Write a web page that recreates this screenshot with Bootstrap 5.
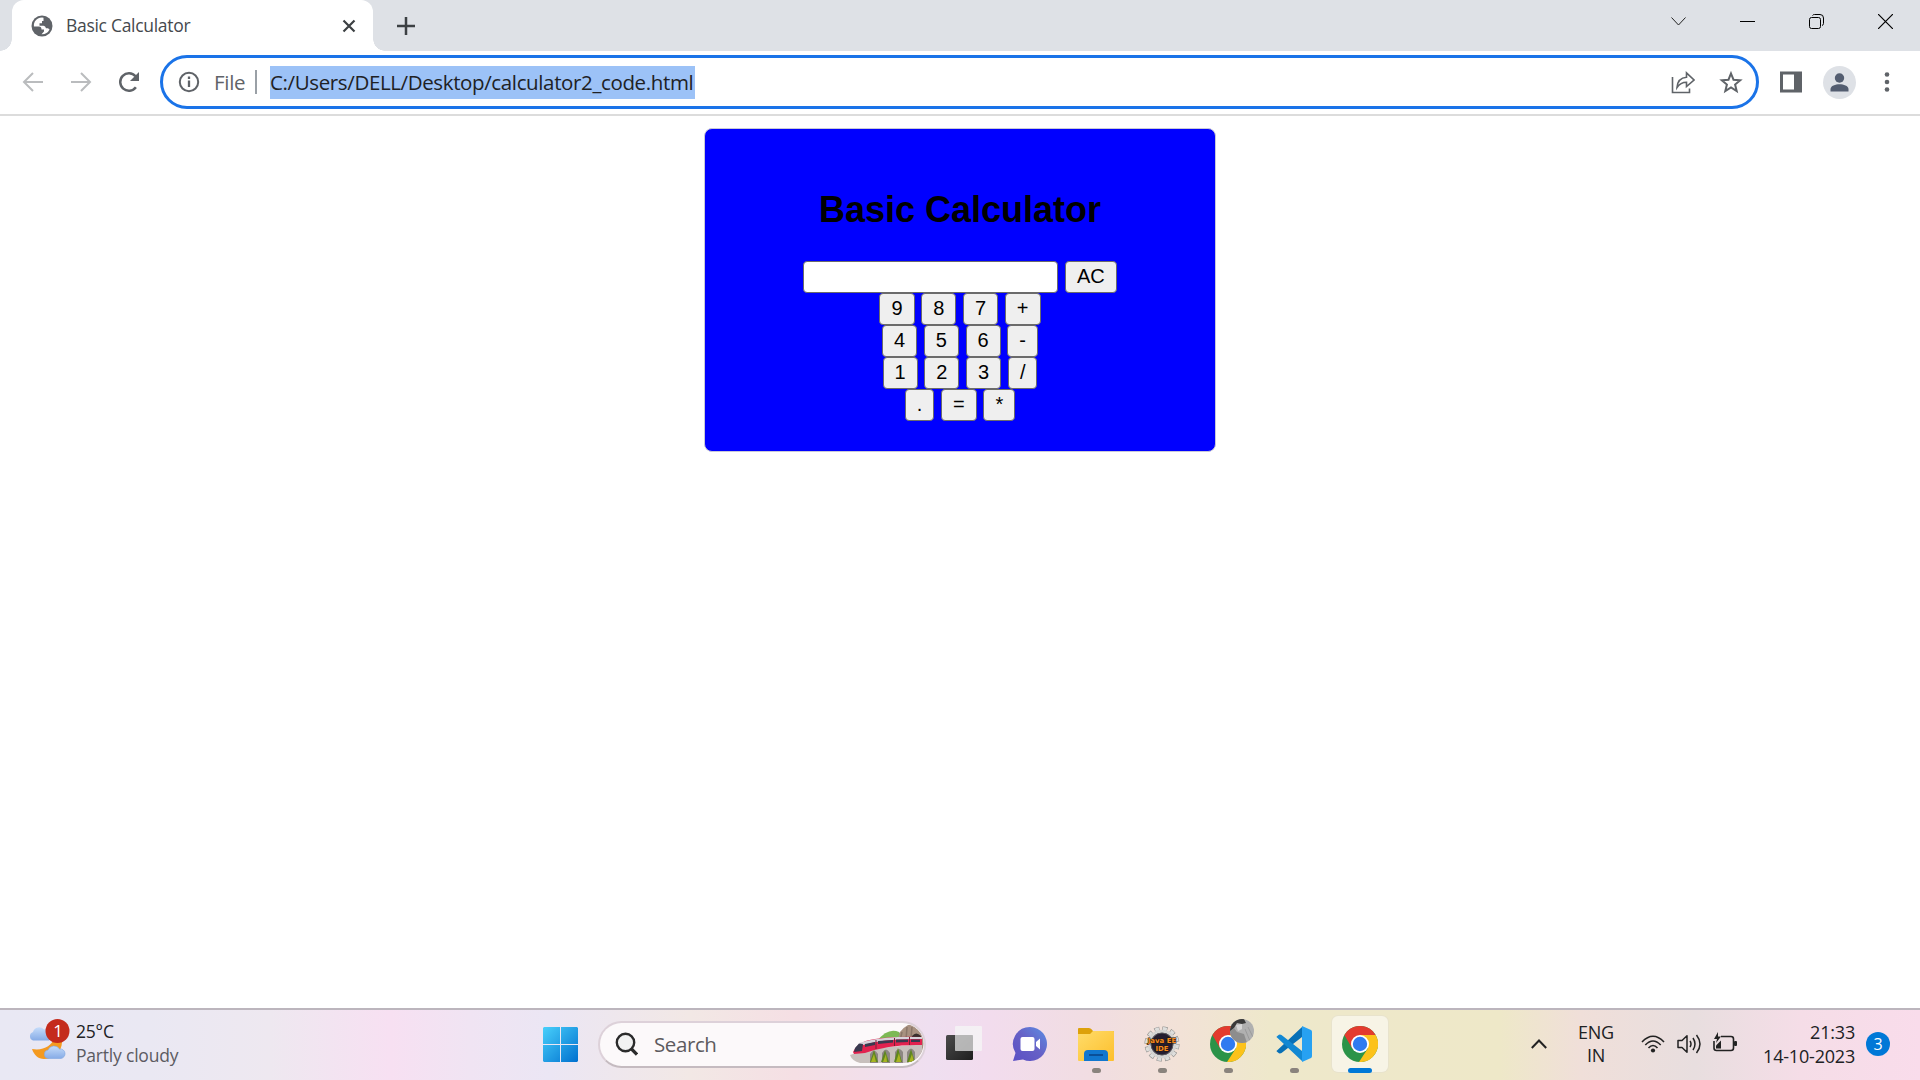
<!DOCTYPE html>
<html lang="en">
<head>
<meta charset="utf-8">
<title>Basic Calculator</title>
<link href="https://cdn.jsdelivr.net/npm/bootstrap@5.3.0/dist/css/bootstrap.min.css" rel="stylesheet">
<script src="https://cdn.jsdelivr.net/npm/bootstrap@5.3.0/dist/js/bootstrap.bundle.min.js"></script>
<style>
body{font-family:"Open Sans","Noto Sans",sans-serif;background:#fff;color:#202124}
svg{display:block;flex:none}
.tabstrip{height:51px;background:#dee1e6;padding-left:12px}
.tab-active{width:360.5px;height:51px;background:#fff;border-radius:12px 12px 0 0;padding:0 17px 0 19px;position:relative}
.tab-active::before,.tab-active::after{content:"";position:absolute;bottom:0;width:12px;height:12px}
.tab-active::before{left:-12px;background:radial-gradient(circle at 0 0,transparent 11.5px,#fff 12px)}
.tab-active::after{right:-12px;background:radial-gradient(circle at 100% 0,transparent 11.5px,#fff 12px)}
.tab-title{font-size:17.5px;letter-spacing:-.3px;margin-left:13px;color:#45494d}
.new-tab{margin-left:24px}
.win-controls{gap:54px;padding-right:27px;margin-bottom:8px}
.toolbar{height:65px;border-bottom:2px solid #dcdcdc;padding:4px 0 5px 21px}
.tool-gap{margin-left:24px}
.omnibox{width:1599px;height:54px;border:3px solid #1a73e8;border-radius:27px;padding:0 13px 0 15px;margin-left:19px}
.scheme{font-size:20.5px;letter-spacing:-.3px;color:#5f6368;margin-left:14px;width:41px}
.sep{width:2px;height:24px;background:#9aa0a6}
.url{font-size:20.5px;letter-spacing:-.37px;line-height:33px;height:33px;background:#9cc2f7;margin-left:13px;width:425px}
.calc{width:512px;height:324px;background:#00f;border:1px solid #c8c8d8;border-radius:8px;margin-top:12px;padding-top:57px;font-family:"Liberation Sans",Arial,sans-serif}
.calc h1{font-size:36px;font-weight:700;line-height:48px;color:#000;margin:0 0 27px}
.calc-row{gap:6.67px;height:32px}
.key,.display-box{height:32px;border:1px solid #6b6b6b;border-radius:4px;font-size:20px;line-height:28px;color:#000}
.key{background:#efefef;padding:0 11px 2px}
.display-box{width:255px;background:#fff}
.taskbar{height:72px;padding-bottom:2px;border-top:2px solid #bcb5bd;background:linear-gradient(90deg,#e9e8f4 0,#eae8f3 150px,#eee8f0 270px,#f7e0f2 390px,#f0e4f3 470px,#ebe6f4 550px,#f2e8e5 690px,#f5dfe4 795px,#efdff0 930px,#f2dcee 985px,#f1dde2 1090px,#f2e2d7 1180px,#eee8cb 1270px,#eee8c8 1500px,#f0dfd9 1580px,#e8dedf 1695px,#f5dde7 1800px,#f9dceb 1920px)}
.weather{width:515px;margin-left:28px;font-size:17.5px;line-height:24px;letter-spacing:-.2px}
.weather-icon{margin-bottom:9px}
.weather-text{margin-left:6px;margin-top:-2px}
.weather small{font-size:inherit;color:#5c5b62}
.search-pill{width:328px;height:47px;margin-left:20px;border-radius:24px;background:#fcf9fa;border:2px solid #ddd1d9;border-bottom-color:#c5bbc0;padding-left:15px;overflow:hidden}
.search-label{font-size:20.5px;letter-spacing:-.4px;color:#5d5b5e;margin-left:16px}
.apps{margin-left:10px}
.app{width:56px;height:56px;margin-right:10px;padding-top:10px;position:relative;border-radius:6px}
.app.running::after{content:"";position:absolute;width:9px;height:5px;border-radius:3px;background:#8a837d;bottom:-1px;left:23.5px}
.app.current{background:#f7f4e6;box-shadow:0 0 0 1px #e8e3cc}
.app.current::after{width:24px;left:16px;background:#0078d7}
.person-dot{position:absolute;left:30px;top:3px}
.tray{font-size:18px;line-height:24px;letter-spacing:-.2px;padding-right:30px}
.lang{width:48px;margin-left:25px;line-height:23px}
.net{margin-left:21px}
.tray-gap{margin-left:12px}
.clock{width:111px;margin-left:7px;margin-top:-1px}
.note{width:24px;height:24px;margin-left:11px;border-radius:50%;background:#0078d7;color:#fff;font-size:16px}
</style>
</head>
<body class="d-flex flex-column vh-100 overflow-hidden">
<svg width="0" height="0" class="position-absolute">
  <defs>
    <symbol id="chrome" viewBox="0 0 36 36">
      <circle cx="18" cy="18" r="18" fill="#2b9348"/>
      <path d="M18 9H33.6A18 18 0 0 1 17 36L25.8 22.5Z" fill="#fcc21b"/>
      <path d="M2.4 9A18 18 0 0 1 33.6 9H18L10.2 22.5Z" fill="#e33b2e"/>
      <circle cx="18" cy="18" r="9" fill="#fff"/><circle cx="18" cy="18" r="7.2" fill="#2f7bf0"/>
    </symbol>
    <linearGradient id="gWin" x1="0" y1="0" x2="1" y2="1"><stop stop-color="#48d0fb"/><stop offset="1" stop-color="#0070cf"/></linearGradient>
    <linearGradient id="gChat" x1="1" y1="0" x2="0" y2="1"><stop stop-color="#5b8fe4"/><stop offset=".5" stop-color="#6660c6"/><stop offset="1" stop-color="#5a4fc4"/></linearGradient>
    <linearGradient id="gFold" x1="0" y1="0" x2="1" y2="1"><stop stop-color="#ffdc6a"/><stop offset="1" stop-color="#fdbf2c"/></linearGradient>
    <linearGradient id="gCloud" x1="0" y1="0" x2="0" y2="1"><stop stop-color="#c5dcfa"/><stop offset="1" stop-color="#86abe6"/></linearGradient>
    <linearGradient id="gDark" x1="0" y1="0" x2="1" y2="1"><stop stop-color="#4b4b4b"/><stop offset="1" stop-color="#1e1e1e"/></linearGradient>
  </defs>
</svg>

<header>
  <div class="tabstrip d-flex align-items-center">
    <div class="tab-active d-flex align-items-center">
      <svg width="22" height="22" viewBox="0 0 22 22"><circle cx="11" cy="11" r="10.5" fill="#5f6368"/><path d="M12.500 2.700Q7 2 3.800 6.500Q2.500 9 2.900 11.500H8Q10.500 11.500 10.500 14.500H13V16.500L10.500 19.200Q16 19.500 18.600 14.500L17 13.300H15Q14.500 11 12.500 10.700H8.500V8.300H11V6H12.500Z" fill="#fff"/></svg>
      <span class="tab-title text-nowrap">Basic Calculator</span>
      <svg class="ms-auto" width="14" height="14" viewBox="0 0 14 14" stroke="#3c4043" stroke-width="2.200"><path d="M1.500 1.500L12.500 12.500M12.500 1.500L1.500 12.500"/></svg>
    </div>
    <svg class="new-tab" width="18" height="18" viewBox="0 0 18 18" stroke="#3c4043" stroke-width="2.500"><path d="M9 0V18M0 9H18"/></svg>
    <div class="win-controls d-flex align-items-center ms-auto">
      <svg width="15" height="15" viewBox="0 0 15 15" fill="none" stroke="#222"><path d="M.5 3.500L7.500 11L14.500 3.500"/></svg>
      <svg width="15" height="15" viewBox="0 0 15 15" stroke="#000"><path d="M0 7.500H15"/></svg>
      <svg width="15" height="15" viewBox="0 0 15 15" fill="none" stroke="#000"><rect x=".5" y="3.500" width="11" height="11" rx="2"/><path d="M3.500 1.500Q4 .5 5.500 .5H11Q14.500 .5 14.500 4V9.500Q14.500 11 13 11.500"/></svg>
      <svg width="15" height="15" viewBox="0 0 15 15" stroke="#000" stroke-width="1.200"><path d="M0 0L15 15M15 0L0 15"/></svg>
    </div>
  </div>

  <div class="toolbar d-flex align-items-center">
    <svg width="24" height="24" viewBox="0 0 24 24" fill="none" stroke="#babcbe" stroke-width="2"><path d="M22 12H3.500M12 3L3 12L12 21"/></svg>
    <svg class="tool-gap" width="24" height="24" viewBox="0 0 24 24" fill="none" stroke="#babcbe" stroke-width="2"><path d="M2 12H20.500M12 3L21 12L12 21"/></svg>
    <svg class="tool-gap" width="24" height="24" viewBox="0 0 24 24"><path d="M18.900 17.200A8.700 8.700 0 1 1 18.500 6.300" fill="none" stroke="#5f6368" stroke-width="2.500"/><path d="M22 2V11H13Z" fill="#5f6368"/></svg>
    <div class="omnibox d-flex align-items-center">
      <svg width="22" height="22" viewBox="0 0 22 22"><circle cx="11" cy="11" r="9.200" fill="none" stroke="#5f6368" stroke-width="2"/><path d="M11 9.500V16M11 5.500V8" stroke="#5f6368" stroke-width="2.300"/></svg>
      <span class="scheme">File</span><span class="sep"></span>
      <span class="url text-nowrap">C:/Users/DELL/Desktop/calculator2_code.html</span>
      <svg class="ms-auto" width="24" height="24" viewBox="0 0 24 24" fill="none" stroke="#5f6368" stroke-width="1.600"><path d="M1.500 7V22.500H18.500V18.500"/><path d="M6 17.500C6.500 11 10 7.700 15.500 7.300V2.800L23 10L15.500 16.500V12.300C11 12.300 8.500 13.800 6 17.500Z"/></svg>
      <svg class="tool-gap" width="24" height="24" viewBox="0 0 24 24"><path d="M12 3.500L14.500 9.700L21.200 10.200L16.100 14.500L17.700 21L12 17.500L6.300 21L7.900 14.500L2.800 10.200L9.500 9.700Z" fill="none" stroke="#5f6368" stroke-width="2"/></svg>
    </div>
    <svg style="margin-left:21px" width="22" height="22" viewBox="0 0 22 22"><path d="M0 .5H22V21.500H0ZM3 3.500V18.500H14V3.500Z" fill="#5f6368" fill-rule="evenodd"/></svg>
    <svg style="margin-left:21px" width="33" height="33" viewBox="0 0 33 33"><circle cx="16.500" cy="16.500" r="16.500" fill="#dee1e6"/><circle cx="16.500" cy="12" r="4.700" fill="#535d70"/><path d="M7.500 25.500V23C7.500 19.800 12.500 18.200 16.500 18.200S25.500 19.800 25.500 23V25.500Z" fill="#535d70"/></svg>
    <svg style="margin-left:28px" width="6" height="22" viewBox="0 0 6 22" fill="#5f6368"><circle cx="3" cy="3.500" r="2.300"/><circle cx="3" cy="11" r="2.300"/><circle cx="3" cy="18.500" r="2.300"/></svg>
  </div>
</header>

<main class="flex-grow-1">
  <div class="calc mx-auto text-center">
    <h1>Basic Calculator</h1>
    <div class="calc-row d-flex justify-content-center"><div class="display-box"></div><button class="key">AC</button></div>
    <div class="calc-row d-flex justify-content-center"><button class="key">9</button><button class="key">8</button><button class="key">7</button><button class="key">+</button></div>
    <div class="calc-row d-flex justify-content-center"><button class="key">4</button><button class="key">5</button><button class="key">6</button><button class="key">-</button></div>
    <div class="calc-row d-flex justify-content-center"><button class="key">1</button><button class="key">2</button><button class="key">3</button><button class="key">/</button></div>
    <div class="calc-row d-flex justify-content-center"><button class="key">.</button><button class="key">=</button><button class="key">*</button></div>
  </div>
</main>

<footer class="taskbar d-flex align-items-center flex-shrink-0">
  <div class="weather d-flex align-items-center flex-shrink-0">
    <svg class="weather-icon" width="42" height="44" viewBox="0 0 42 44">
      <path d="M34 24C34 34 25 41 16 41C10 41 6 37 4 31C15 33 24 28 26 20L34 22Z" fill="#f49a20"/>
      <path d="M5 22.500A4.500 4.500 0 0 1 5 14A6.500 6.500 0 0 1 16 11.500A6 6 0 0 1 21 22.500Z" fill="url(#gCloud)"/>
      <path d="M20 40.500A4.300 4.300 0 0 1 20 32A6.500 6.500 0 0 1 31.500 31A4.800 4.800 0 0 1 33 40.500Z" fill="url(#gCloud)" stroke="#7fa6e0" stroke-width=".6"/>
      <circle cx="29.500" cy="13" r="12" fill="#c42b1c"/><text x="30" y="19" text-anchor="middle" font-size="17" fill="#fff">1</text>
    </svg>
    <div class="weather-text text-nowrap"><div>25°C</div><small>Partly cloudy</small></div>
  </div>
  <svg width="35" height="35" viewBox="0 0 35 35"><path d="M1 0H17V17H0V1ZM18 0H34L35 1V17H18ZM0 18H17V35H1L0 34ZM18 18H35V34L34 35H18Z" fill="url(#gWin)"/></svg>
  <div class="search-pill d-flex align-items-center flex-shrink-0">
    <svg width="23" height="24" viewBox="0 0 23 24" fill="none" stroke="#2b2b2b" stroke-width="2.400"><circle cx="10.500" cy="10.500" r="8.700" fill="#f2f2f2"/><path d="M16.500 17L22 22.500" stroke-width="3.200"/></svg>
    <span class="search-label">Search</span>
    <svg class="ms-auto" width="74" height="40" viewBox="0 0 74 40">
      <defs><clipPath id="pillEnd"><path d="M0 0H54A19 19 0 0 1 54 39H0Z"/></clipPath></defs>
      <g clip-path="url(#pillEnd)">
        <path d="M27 17Q38 3 49 8L58 20H27Z" fill="#7db955"/>
        <path d="M46 20L50 8Q54 3 58 1Q63 0 66 4L74 9V40H60V20Z" fill="#a89180"/>
        <path d="M52 8L50 17M57 3L56 16M62 3L61 14" stroke="#8a7668" stroke-width="1.500"/>
        <path d="M62 17V12Q66 7 71 12V17Z" fill="#39312f"/>
        <path d="M0 31L18 25L72 20V39H10Q2 37 0 31Z" fill="#c8c0bd"/>
        <g fill="#8d8783"><path d="M20 39V30Q24 23 28 30V39ZM32 39V29Q36 22 40 29V39ZM45 39V28Q49 22 53 28V39ZM57 39V28Q61 21 65 28V39Z"/></g>
        <path d="M3 28Q8 17 25 15Q45 12 72 13V21Q40 20 15 29L4 30Z" fill="#e2224f"/>
        <path d="M9 19Q25 14 48 13L72 13V15Q35 14 13 21Z" fill="#d8d2da"/>
        <path d="M5 24L9 19.500L13 20L12 27L4 28ZM15 20L25 18V21L15 23ZM28 17L43 16V18.500L28 20ZM46 15.500H58V18L46 18.500ZM61 15.500H70V18H61Z" fill="#39394f"/>
        <path d="M26 16V25M44.500 14V22M59.500 13V21" stroke="#762038" stroke-width="1"/>
        <path d="M20 38L24 26L28 38ZM31 38L35 26L39 38ZM44 38L48 24L52 38ZM57 38L61 25L65 38Z" fill="#5f8620"/>
        <path d="M21 38L24 30L26 38ZM33 38L36 30L37 38ZM46 38L49 29L51 38ZM59 38L62 30L64 38Z" fill="#a9b522"/>
      </g>
    </svg>
  </div>

  <div class="apps d-flex">
    <div class="app d-flex justify-content-center"><svg width="36" height="36" viewBox="0 0 36 36"><rect y="9" width="27" height="25" rx="1.500" fill="url(#gDark)"/><rect x="9" width="27" height="25" rx="1" fill="#f5f5f5" opacity=".8"/><path d="M9 9H27V25H9Z" fill="#999" opacity=".45"/></svg></div>
    <div class="app d-flex justify-content-center"><svg width="36" height="36" viewBox="0 0 36 36"><path d="M18 1A17 17 0 1 1 11 33.500L1 35L3.500 27A17 17 0 0 1 18 1Z" fill="url(#gChat)"/><rect x="8.500" y="11" width="14" height="14" rx="2" fill="#fff"/><path d="M24 16L28 12.500V23.500L24 20Z" fill="#fff"/></svg></div>
    <div class="app running d-flex justify-content-center"><svg width="36" height="36" viewBox="0 0 36 36"><path d="M0 9V3Q0 2 1 2H11Q13 2 15 5H35Q36 5 36 6V9Z" fill="#dda10a"/><path d="M0 8H12L15 5H35Q36 5 36 6V34Q36 35 35 35H1Q0 35 0 34Z" fill="url(#gFold)"/><path d="M6 35V28Q6 24 10 24H26Q30 24 30 28V35Z" fill="#1177cf"/><path d="M11 29H25" stroke="#0a4f98" stroke-width="2"/></svg></div>
    <div class="app running d-flex justify-content-center"><svg class="overflow-visible" width="36" height="36" viewBox="0 0 36 36"><circle cx="18" cy="18" r="15.500" fill="none" stroke="#8a8a88" stroke-width="4" stroke-dasharray="5 3.115"/><circle cx="18" cy="18" r="15" fill="none" stroke="#dededc" stroke-width="4" stroke-dasharray="3.900 3.954" stroke-dashoffset="-.5"/><circle cx="18" cy="18" r="12.800" fill="#292239" stroke="#d4d4d2" stroke-width="3"/><circle cx="18" cy="18" r="11" fill="#231d30" stroke="#666" stroke-width=".8"/><g font-family="DejaVu Sans" font-size="7" letter-spacing="0" font-weight="bold" fill="#f58a1f" stroke="#24160a" stroke-width="1" paint-order="stroke" text-anchor="middle"><text x="18" y="16.500">Java EE</text><text x="18" y="24.500">IDE</text></g></svg></div>
    <div class="app running d-flex justify-content-center"><svg width="36" height="36"><use href="#chrome"/></svg>
      <svg class="person-dot" width="24" height="24" viewBox="0 0 24 24"><defs><clipPath id="face"><circle cx="12" cy="12" r="12"/></clipPath></defs><g clip-path="url(#face)"><rect width="24" height="24" fill="#b0b0b0"/><path d="M0 0H14L16 4L12 5L7 4L4 9L0 13Z" fill="#3a3a3a"/><path d="M0 12L4 9L7 13L14 15L17 24H0Z" fill="#8d8d8d"/><path d="M6 6L12 5L12 10L8 12Z" fill="#d6d6d6"/><path d="M15 10L20 22M18 8L23 18" stroke="#9a9a9a"/></g></svg></div>
    <div class="app running d-flex justify-content-center"><svg width="36" height="36" viewBox="0 0 36 36"><path d="M1 24.500L26 1V11L5.500 27Q3.500 28 2 26.500L.8 25.500Q0 25 1 24.500Z" fill="#0870b6"/><path d="M1 11.500L26 35V25L5.500 9Q3.500 8 2 9.500L.8 10.500Q0 11 1 11.500Z" fill="#1288d3"/><path d="M26 0L35 4Q36 4.500 36 6V30Q36 31.500 35 32L26 36Z" fill="#27a1f2"/></svg></div>
    <div class="app running current d-flex justify-content-center me-0"><svg width="36" height="36"><use href="#chrome"/></svg></div>
  </div>

  <div class="tray d-flex align-items-center ms-auto">
    <svg width="16" height="10" viewBox="0 0 16 10" fill="none" stroke="#222" stroke-width="2"><path d="M.8 9L8 1.500L15.200 9"/></svg>
    <div class="lang text-center">ENG<br>IN</div>
    <svg class="net" width="24" height="18" viewBox="0 0 24 18" fill="none" stroke="#222" stroke-width="1.600"><path d="M1 7Q12-4.500 23 7M4.300 10Q12 2 19.700 10M7.500 13Q12 8 16.500 13"/><circle cx="12" cy="15.500" r="2.100" fill="#222" stroke="none"/></svg>
    <svg class="tray-gap" width="24" height="20" viewBox="0 0 24 20" fill="none" stroke="#222" stroke-width="1.500"><path d="M1 6.500H5L10 1.800V18.200L5 13.500H1Z" stroke-linejoin="round"/><path d="M13 7Q15 10 13 13M16 4Q20 10 16 16M19.500 1Q26.500 10 19.500 19"/></svg>
    <svg class="tray-gap" width="24" height="24" viewBox="0 0 24 24"><path d="M8 4.500H18Q20.500 4.500 20.500 7V16Q20.500 18.500 18 18.500H3.500Q1 18.500 1 16V9" fill="none" stroke="#222" stroke-width="1.600"/><rect x="21" y="9" width="3" height="5" rx="1" fill="#222"/><path d="M5 0L1 7H4L3 11L8 4.500H5Z" fill="#222"/><path d="M3 16.500V13.500L8 8.500V16.500Z" fill="#222"/></svg>
    <div class="clock text-end text-nowrap">21:33<br>14-10-2023</div>
    <span class="note d-flex align-items-center justify-content-center">3</span>
  </div>
</footer>
</body>
</html>
